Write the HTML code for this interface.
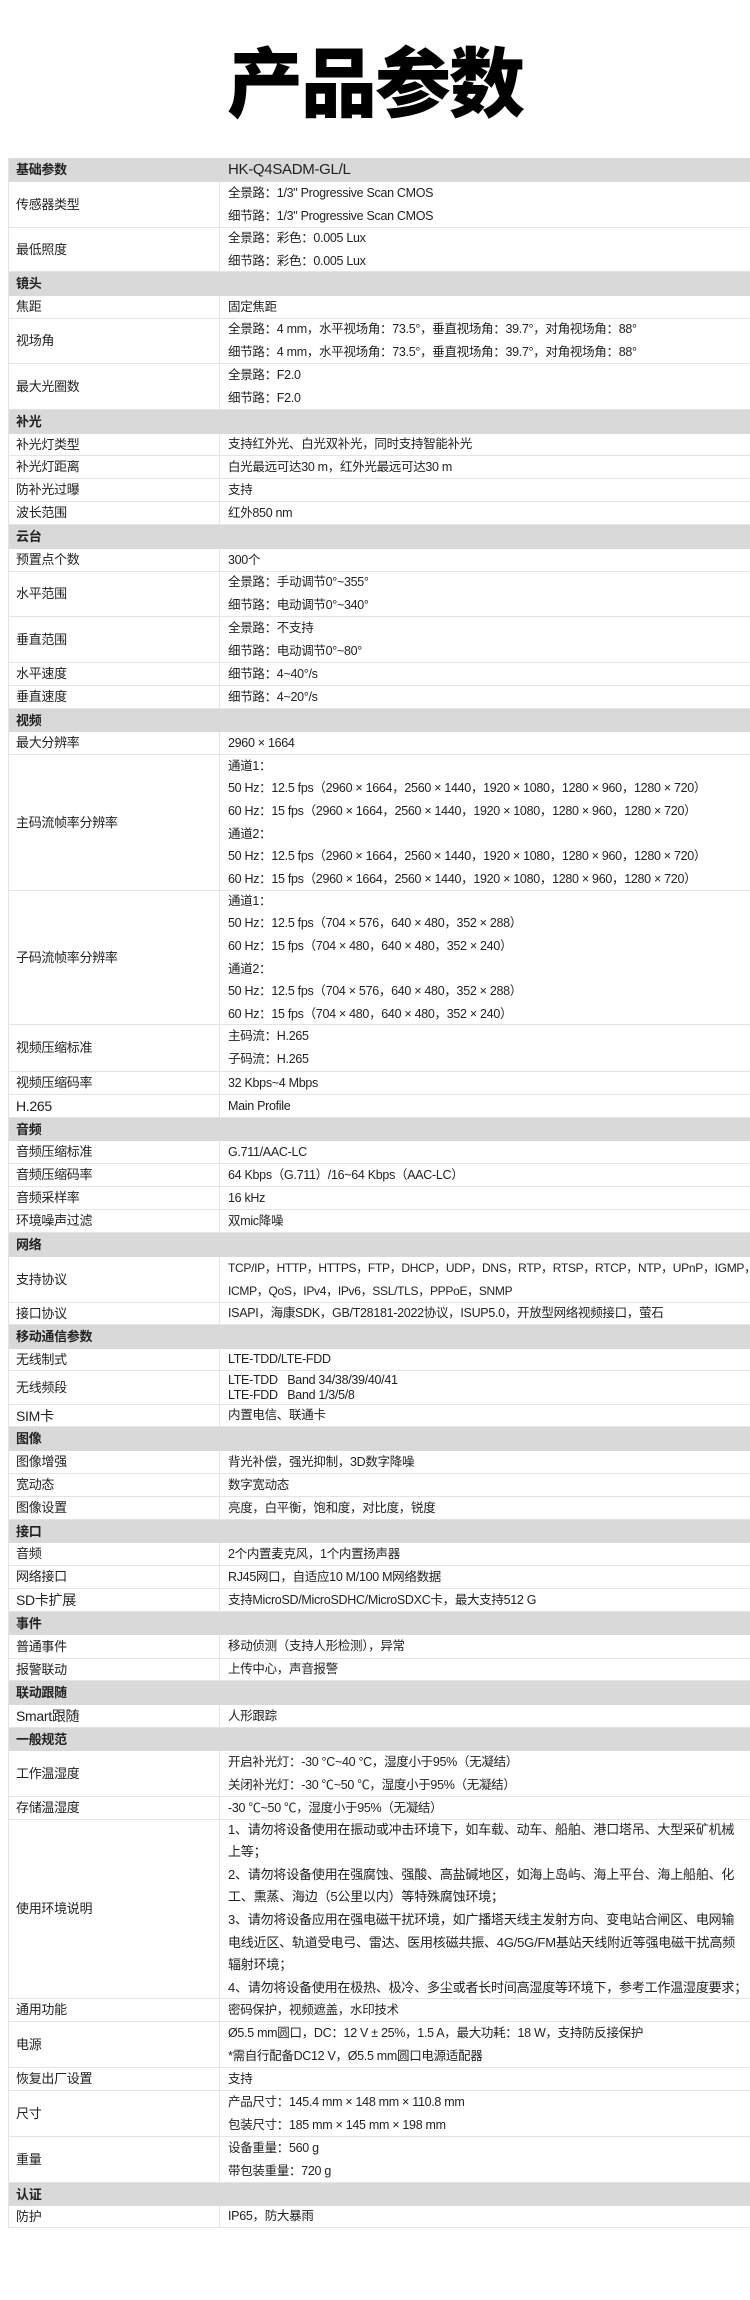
<!DOCTYPE html>
<html><head><meta charset="utf-8"><style>
*{margin:0;padding:0;box-sizing:border-box}
body{width:750px;height:2300px;background:#fff;font-family:"Liberation Sans","Noto Sans CJK SC",sans-serif;color:#222;position:relative;overflow:hidden}
h1{position:absolute;top:30px;left:0;width:750px;text-align:center;font-size:76px;font-weight:900;line-height:96px;color:#000;font-family:"Noto Sans CJK SC",sans-serif;letter-spacing:-2px}
.t{position:absolute;top:158px;left:8px;width:742px;border-left:1px solid #e2e2e2}
.r{display:flex;border-bottom:1.5px solid #e4e4e4;font-size:13px;letter-spacing:-0.3px;overflow:hidden}
.l{width:211px;flex:none;padding-left:7px;border-right:1px solid #e4e4e4;display:flex;align-items:center;line-height:16px}
.v{padding-left:8px;display:flex;flex-direction:column;justify-content:center;line-height:22.6px;font-size:12.5px;white-space:nowrap}
.g{background:#d9d9d9;font-weight:bold;border-bottom:none}
.g .l{border-right:none}
</style></head><body>
<h1>产品参数</h1>
<div class="t">
<div class="r g" style="height:24px"><div class="l">基础参数</div><div class="v" style="font-weight:normal;font-size:15px">HK-Q4SADM-GL/L</div></div>
<div class="r" style="height:46px"><div class="l">传感器类型</div><div class="v"><div>全景路：1/3" Progressive Scan CMOS</div><div>细节路：1/3" Progressive Scan CMOS</div></div></div>
<div class="r" style="height:44px"><div class="l">最低照度</div><div class="v"><div>全景路：彩色：0.005 Lux</div><div>细节路：彩色：0.005 Lux</div></div></div>
<div class="r g" style="height:24px"><div class="l">镜头</div></div>
<div class="r" style="height:23px"><div class="l">焦距</div><div class="v">固定焦距</div></div>
<div class="r" style="height:45px"><div class="l">视场角</div><div class="v"><div>全景路：4 mm，水平视场角：73.5°，垂直视场角：39.7°，对角视场角：88°</div><div>细节路：4 mm，水平视场角：73.5°，垂直视场角：39.7°，对角视场角：88°</div></div></div>
<div class="r" style="height:46px"><div class="l">最大光圈数</div><div class="v"><div>全景路：F2.0</div><div>细节路：F2.0</div></div></div>
<div class="r g" style="height:24px"><div class="l">补光</div></div>
<div class="r" style="height:22px"><div class="l">补光灯类型</div><div class="v">支持红外光、白光双补光，同时支持智能补光</div></div>
<div class="r" style="height:23px"><div class="l">补光灯距离</div><div class="v">白光最远可达30 m，红外光最远可达30 m</div></div>
<div class="r" style="height:23px"><div class="l">防补光过曝</div><div class="v">支持</div></div>
<div class="r" style="height:23px"><div class="l">波长范围</div><div class="v">红外850 nm</div></div>
<div class="r g" style="height:24px"><div class="l">云台</div></div>
<div class="r" style="height:23px"><div class="l">预置点个数</div><div class="v">300个</div></div>
<div class="r" style="height:45px"><div class="l">水平范围</div><div class="v"><div>全景路：手动调节0°~355°</div><div>细节路：电动调节0°~340°</div></div></div>
<div class="r" style="height:46px"><div class="l">垂直范围</div><div class="v"><div>全景路：不支持</div><div>细节路：电动调节0°~80°</div></div></div>
<div class="r" style="height:23px"><div class="l">水平速度</div><div class="v">细节路：4~40°/s</div></div>
<div class="r" style="height:23px"><div class="l">垂直速度</div><div class="v">细节路：4~20°/s</div></div>
<div class="r g" style="height:23px"><div class="l">视频</div></div>
<div class="r" style="height:23px"><div class="l">最大分辨率</div><div class="v">2960 × 1664</div></div>
<div class="r" style="height:136px"><div class="l">主码流帧率分辨率</div><div class="v"><div>通道1：</div><div>50 Hz：12.5 fps（2960 × 1664，2560 × 1440，1920 × 1080，1280 × 960，1280 × 720）</div><div>60 Hz：15 fps（2960 × 1664，2560 × 1440，1920 × 1080，1280 × 960，1280 × 720）</div><div>通道2：</div><div>50 Hz：12.5 fps（2960 × 1664，2560 × 1440，1920 × 1080，1280 × 960，1280 × 720）</div><div>60 Hz：15 fps（2960 × 1664，2560 × 1440，1920 × 1080，1280 × 960，1280 × 720）</div></div></div>
<div class="r" style="height:134px"><div class="l">子码流帧率分辨率</div><div class="v"><div>通道1：</div><div>50 Hz：12.5 fps（704 × 576，640 × 480，352 × 288）</div><div>60 Hz：15 fps（704 × 480，640 × 480，352 × 240）</div><div>通道2：</div><div>50 Hz：12.5 fps（704 × 576，640 × 480，352 × 288）</div><div>60 Hz：15 fps（704 × 480，640 × 480，352 × 240）</div></div></div>
<div class="r" style="height:47px"><div class="l">视频压缩标准</div><div class="v"><div>主码流：H.265</div><div>子码流：H.265</div></div></div>
<div class="r" style="height:23px"><div class="l">视频压缩码率</div><div class="v">32 Kbps~4 Mbps</div></div>
<div class="r" style="height:23px"><div class="l" style="font-size:14px">H.265</div><div class="v">Main Profile</div></div>
<div class="r g" style="height:23px"><div class="l">音频</div></div>
<div class="r" style="height:23px"><div class="l">音频压缩标准</div><div class="v">G.711/AAC-LC</div></div>
<div class="r" style="height:23px"><div class="l">音频压缩码率</div><div class="v">64 Kbps（G.711）/16~64 Kbps（AAC-LC）</div></div>
<div class="r" style="height:23px"><div class="l">音频采样率</div><div class="v">16 kHz</div></div>
<div class="r" style="height:23px"><div class="l">环境噪声过滤</div><div class="v">双mic降噪</div></div>
<div class="r g" style="height:24px"><div class="l">网络</div></div>
<div class="r" style="height:46px"><div class="l">支持协议</div><div class="v" style="font-size:12px"><div>TCP/IP，HTTP，HTTPS，FTP，DHCP，UDP，DNS，RTP，RTSP，RTCP，NTP，UPnP，IGMP，</div><div>ICMP，QoS，IPv4，IPv6，SSL/TLS，PPPoE，SNMP</div></div></div>
<div class="r" style="height:22px"><div class="l">接口协议</div><div class="v">ISAPI，海康SDK，GB/T28181-2022协议，ISUP5.0，开放型网络视频接口，萤石</div></div>
<div class="r g" style="height:24px"><div class="l">移动通信参数</div></div>
<div class="r" style="height:22px"><div class="l">无线制式</div><div class="v">LTE-TDD/LTE-FDD</div></div>
<div class="r" style="height:34px"><div class="l">无线频段</div><div class="v" style="line-height:15px"><div>LTE-TDD&nbsp;&nbsp;&nbsp;Band 34/38/39/40/41</div><div>LTE-FDD&nbsp;&nbsp;&nbsp;Band 1/3/5/8</div></div></div>
<div class="r" style="height:22px"><div class="l" style="font-size:14px">SIM卡</div><div class="v">内置电信、联通卡</div></div>
<div class="r g" style="height:24px"><div class="l">图像</div></div>
<div class="r" style="height:23px"><div class="l">图像增强</div><div class="v">背光补偿，强光抑制，3D数字降噪</div></div>
<div class="r" style="height:23px"><div class="l">宽动态</div><div class="v">数字宽动态</div></div>
<div class="r" style="height:23px"><div class="l">图像设置</div><div class="v">亮度，白平衡，饱和度，对比度，锐度</div></div>
<div class="r g" style="height:23px"><div class="l">接口</div></div>
<div class="r" style="height:23px"><div class="l">音频</div><div class="v">2个内置麦克风，1个内置扬声器</div></div>
<div class="r" style="height:23px"><div class="l">网络接口</div><div class="v">RJ45网口，自适应10 M/100 M网络数据</div></div>
<div class="r" style="height:23px"><div class="l" style="font-size:14px">SD卡扩展</div><div class="v">支持MicroSD/MicroSDHC/MicroSDXC卡，最大支持512 G</div></div>
<div class="r g" style="height:23px"><div class="l">事件</div></div>
<div class="r" style="height:24px"><div class="l">普通事件</div><div class="v">移动侦测（支持人形检测），异常</div></div>
<div class="r" style="height:22px"><div class="l">报警联动</div><div class="v">上传中心，声音报警</div></div>
<div class="r g" style="height:24px"><div class="l">联动跟随</div></div>
<div class="r" style="height:23px"><div class="l" style="font-size:14px">Smart跟随</div><div class="v">人形跟踪</div></div>
<div class="r g" style="height:23px"><div class="l">一般规范</div></div>
<div class="r" style="height:46px"><div class="l">工作温湿度</div><div class="v"><div>开启补光灯：-30 °C~40 °C，湿度小于95%（无凝结）</div><div>关闭补光灯：-30 ℃~50 ℃，湿度小于95%（无凝结）</div></div></div>
<div class="r" style="height:23px"><div class="l">存储温湿度</div><div class="v">-30 ℃~50 ℃，湿度小于95%（无凝结）</div></div>
<div class="r" style="height:179px"><div class="l">使用环境说明</div><div class="v" style="font-size:13px;letter-spacing:-0.2px"><div>1、请勿将设备使用在振动或冲击环境下，如车载、动车、船舶、港口塔吊、大型采矿机械</div><div>上等；</div><div>2、请勿将设备使用在强腐蚀、强酸、高盐碱地区，如海上岛屿、海上平台、海上船舶、化</div><div>工、熏蒸、海边（5公里以内）等特殊腐蚀环境；</div><div>3、请勿将设备应用在强电磁干扰环境，如广播塔天线主发射方向、变电站合闸区、电网输</div><div>电线近区、轨道受电弓、雷达、医用核磁共振、4G/5G/FM基站天线附近等强电磁干扰高频</div><div>辐射环境；</div><div>4、请勿将设备使用在极热、极冷、多尘或者长时间高湿度等环境下，参考工作温湿度要求；</div></div></div>
<div class="r" style="height:23px"><div class="l">通用功能</div><div class="v">密码保护，视频遮盖，水印技术</div></div>
<div class="r" style="height:46px"><div class="l">电源</div><div class="v"><div>Ø5.5 mm圆口，DC：12 V ± 25%，1.5 A，最大功耗：18 W，支持防反接保护</div><div>*需自行配备DC12 V，Ø5.5 mm圆口电源适配器</div></div></div>
<div class="r" style="height:23px"><div class="l">恢复出厂设置</div><div class="v">支持</div></div>
<div class="r" style="height:46px"><div class="l">尺寸</div><div class="v"><div>产品尺寸：145.4 mm × 148 mm × 110.8 mm</div><div>包装尺寸：185 mm × 145 mm × 198 mm</div></div></div>
<div class="r" style="height:46px"><div class="l">重量</div><div class="v"><div>设备重量：560 g</div><div>带包装重量：720 g</div></div></div>
<div class="r g" style="height:23px"><div class="l">认证</div></div>
<div class="r" style="height:22px"><div class="l">防护</div><div class="v">IP65，防大暴雨</div></div>
</div>
</body></html>
